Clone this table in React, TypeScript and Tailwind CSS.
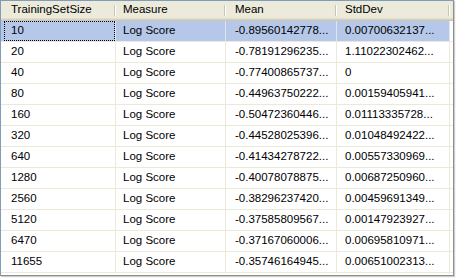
import React from "react";

const rows: [string, string, string, string][] = [
  ["10", "Log Score", "-0.89560142778...", "0.00700632137..."],
  ["20", "Log Score", "-0.78191296235...", "1.11022302462..."],
  ["40", "Log Score", "-0.77400865737...", "0"],
  ["80", "Log Score", "-0.44963750222...", "0.00159405941..."],
  ["160", "Log Score", "-0.50472360446...", "0.01113335728..."],
  ["320", "Log Score", "-0.44528025396...", "0.01048492422..."],
  ["640", "Log Score", "-0.41434278722...", "0.00557330969..."],
  ["1280", "Log Score", "-0.40078078875...", "0.00687250960..."],
  ["2560", "Log Score", "-0.38296237420...", "0.00459691349..."],
  ["5120", "Log Score", "-0.37585809567...", "0.00147923927..."],
  ["6470", "Log Score", "-0.37167060006...", "0.00695810971..."],
  ["11655", "Log Score", "-0.35746164945...", "0.00651002313..."],
];

const headers = ["TrainingSetSize", "Measure", "Mean", "StdDev"];
const widths = ["w-[115px] pl-[10px]", "w-[110px] pl-[7px]", "w-[111px] pl-[9px]", "w-[113px] pl-[8px]"];

export default function App() {
  return (
    <div className="w-[457px] h-[280px] bg-white font-['Liberation_Sans',Arial,sans-serif] text-[11.5px] text-black leading-none">
      <div className="w-[454px] h-[276px] box-border border border-[#7f9db9] border-r-[#8e8e8e] border-b-[#8e8e8e] shadow-[1px_1px_1px_rgba(0,0,0,0.2)] bg-white overflow-hidden">
        <div className="flex h-[20px] bg-[linear-gradient(to_bottom,#ebeadb_0,#ebeadb_17px,#e2dec9_17px,#e2dec9_18px,#d6d2c2_18px,#d6d2c2_19px,#cbc7b8_19px)]">
          {headers.map((h, i) => (
            <div key={h} className={`${widths[i]} relative flex items-center pb-[3px] shrink-0 box-border`}>
              <span>{h}</span>
              <div className="absolute right-0 top-[4px] bottom-[5px] w-[2px] flex">
                <div className="w-[1px] bg-[#c7c5b2]" />
                <div className="w-[1px] bg-white" />
              </div>
            </div>
          ))}
          <div className="flex-1" />
        </div>
        {rows.map((r, ri) => (
          <div
            key={ri}
            className={`flex h-[21px] box-border border-b border-[#ece9d8] ${ri === 0 ? "bg-[#b5c8e9]" : ""}`}
          >
            {r.map((c, ci) => (
              <div
                key={ci}
                className={`${widths[ci]} relative flex items-center shrink-0 box-border border-r ${ri === 0 ? "border-[#dfe5f0]" : "border-[#ece9d8]"}`}
              >
                {ri === 0 && ci === 0 && (
                  <div className="absolute left-[3px] top-0 bottom-0 right-0 border border-dotted border-black" />
                )}
                <span className="whitespace-nowrap">{c}</span>
              </div>
            ))}
            <div className="flex-1 bg-white" />
          </div>
        ))}
      </div>
    </div>
  );
}
